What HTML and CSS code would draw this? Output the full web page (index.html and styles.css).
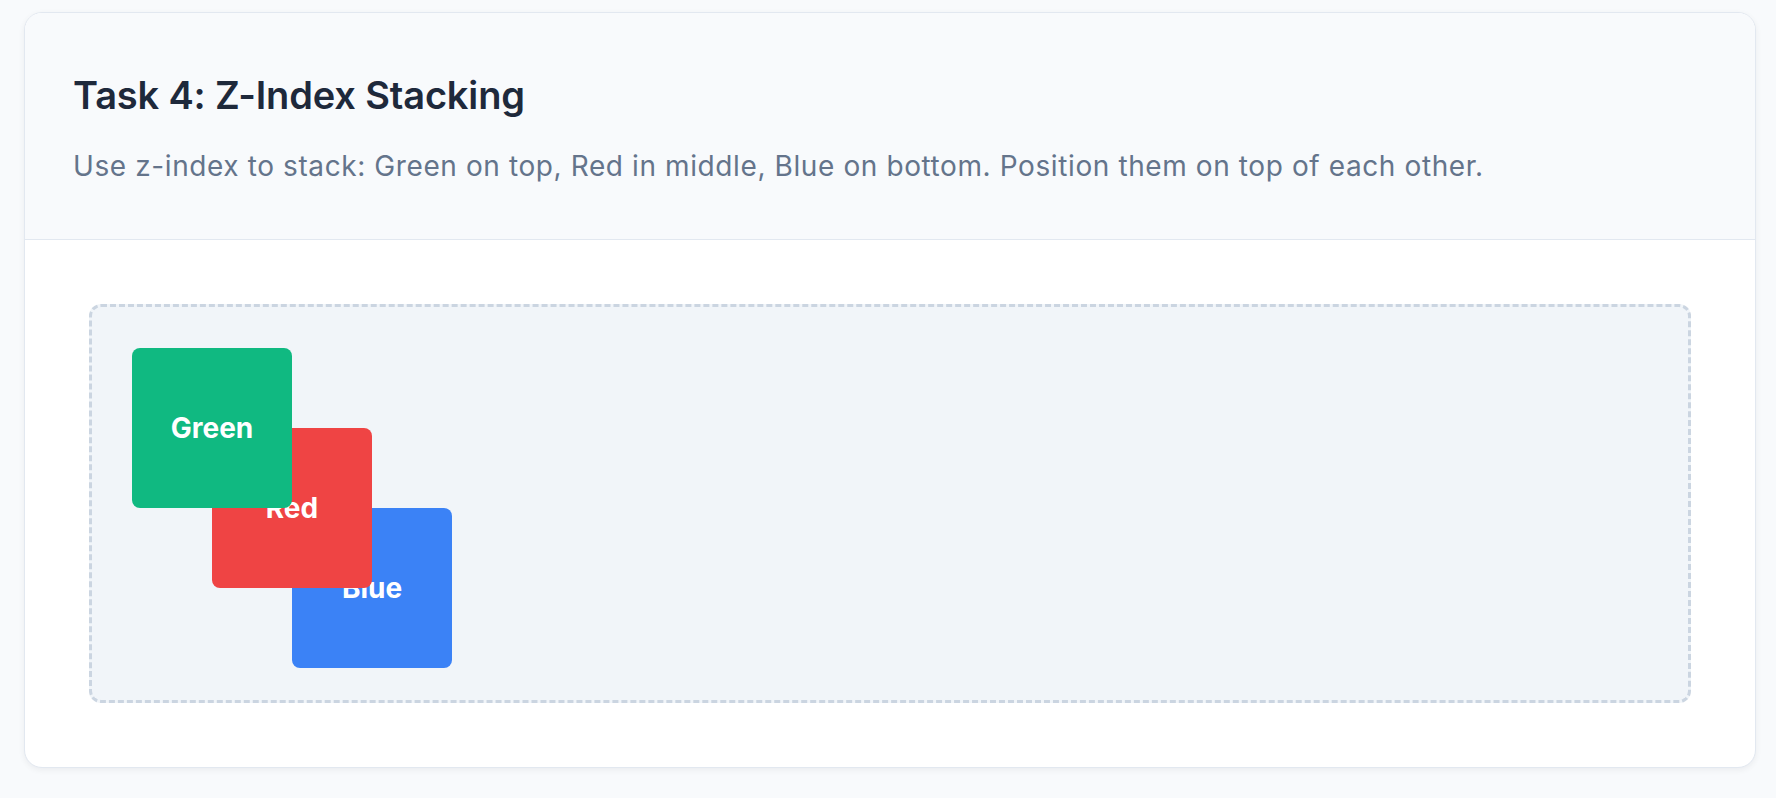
FILE: index.html
```html
<!DOCTYPE html>
<html lang="en">
<head>
<meta charset="utf-8">
<title>Task 4: Z-Index Stacking</title>
<link rel="stylesheet" href="styles.css">
</head>
<body>
  <section class="card">
    <header class="card-header">
      <h1 class="title">Task 4: Z-Index Stacking</h1>
      <p class="desc">Use z-index to stack: Green on top, Red in middle, Blue on bottom. Position them on top of each other.</p>
    </header>
    <div class="card-body">
      <div class="stage">
        <div class="box box-blue">Blue</div>
        <div class="box box-red">Red</div>
        <div class="box box-green">Green</div>
      </div>
    </div>
  </section>
</body>
</html>
```

FILE: styles.css
```css
* { box-sizing: border-box; }
html, body { margin: 0; }
body {
  background: #f8fafc;
  font-family: Inter, "Noto Sans", "Liberation Sans", sans-serif;
  padding: 12px 20px 30px 24px;
}
.card {
  background: #ffffff;
  border: 1px solid #e2e8f0;
  border-radius: 18px;
  box-shadow: 0 2px 6px rgba(15, 23, 42, 0.06);
  overflow: hidden;
}
.card-header {
  background: #f8fafc;
  border-bottom: 1px solid #e2e8f0;
  padding: 59px 48px 53px 48px;
}
.title {
  margin: 0 0 28px 0;
  font-size: 38px;
  line-height: 46px;
  font-weight: 600;
  letter-spacing: -0.15px;
  color: #1e293b;
}
.desc {
  margin: 0;
  font-size: 28px;
  line-height: 40px;
  font-weight: 400;
  letter-spacing: 0.6px;
  color: #64748b;
}
.card-body {
  padding: 64px;
}
.stage {
  position: relative;
  height: 399px;
  background: #f1f5f9;
  border: 3px dashed #cbd5e1;
  border-radius: 12px;
}
.box {
  position: absolute;
  width: 160px;
  height: 160px;
  border-radius: 8px;
  display: flex;
  align-items: center;
  justify-content: center;
  color: #ffffff;
  font-size: 28px;
  font-weight: 700;
}
.box-green { left: 40px; top: 41px; background: #10b981; z-index: 3; }
.box-red { left: 120px; top: 121px; background: #ef4444; z-index: 2; }
.box-blue { left: 200px; top: 201px; background: #3b82f6; z-index: 1; }
```
